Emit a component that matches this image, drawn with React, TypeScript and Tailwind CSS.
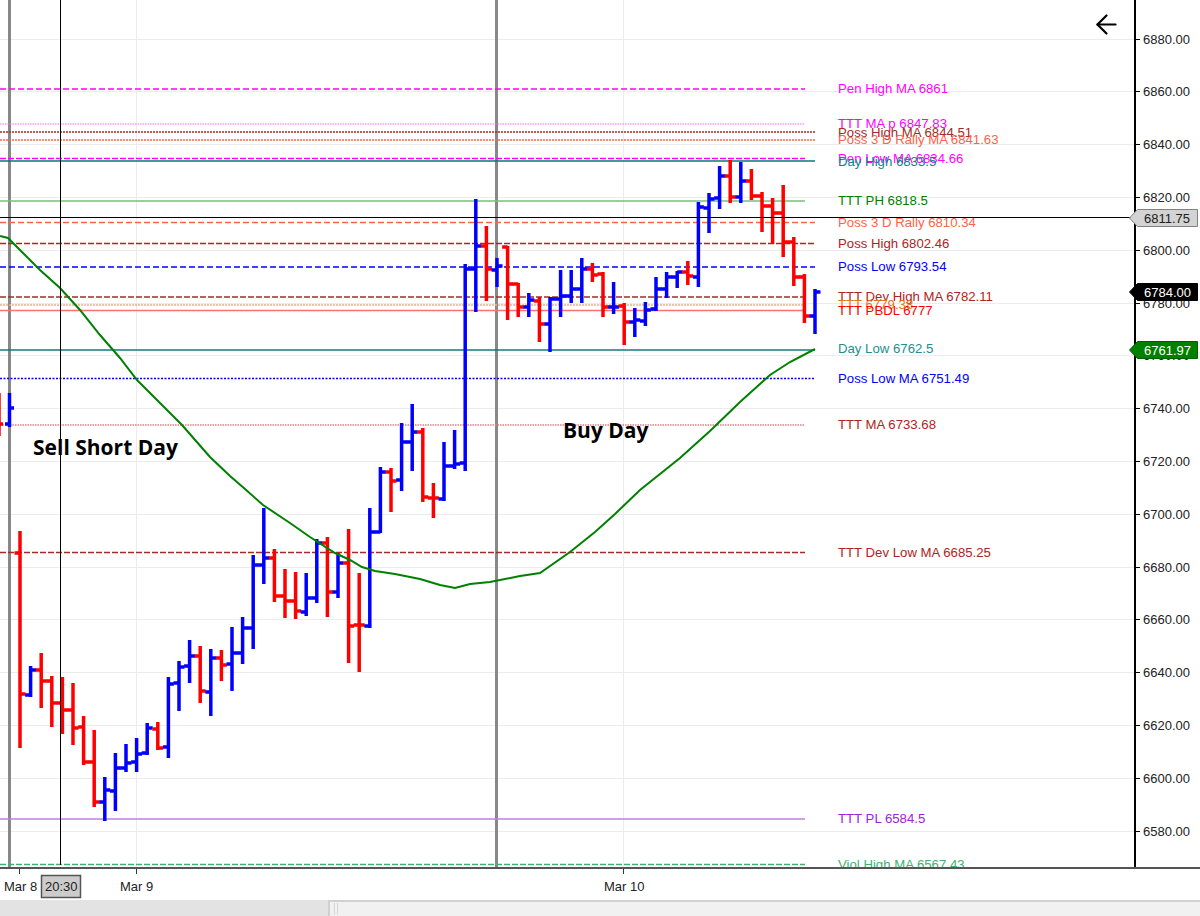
import { ArrowLeft } from "lucide-react";

// [color, high, low, open, close] in chart pixels, one bar every 10.6px
const bars: [string, number, number, number, number][] = [
  ["r", 531, 748, 553, 694], ["b", 666, 697, 695, 670], ["r", 653, 708, 670, 681], ["r", 676, 727, 681, 703],
  ["r", 677, 734, 703, 710], ["r", 683, 745, 710, 728], ["r", 716, 765, 727, 762], ["r", 730, 807, 762, 802],
  ["b", 777, 821, 802, 790], ["b", 753, 811, 791, 768], ["b", 744, 772, 768, 763], ["b", 738, 772, 762, 754],
  ["b", 723, 755, 753, 728], ["r", 722, 750, 729, 748], ["b", 677, 758, 747, 684], ["b", 661, 711, 683, 667],
  ["b", 640, 683, 666, 656], ["r", 646, 703, 656, 691], ["b", 649, 716, 692, 658], ["r", 650, 681, 658, 665],
  ["b", 627, 691, 664, 653], ["b", 617, 664, 653, 628], ["b", 555, 649, 628, 565], ["b", 508, 584, 565, 558],
  ["r", 549, 602, 558, 596], ["r", 569, 618, 596, 601], ["r", 572, 619, 601, 611], ["b", 573, 616, 612, 598],
  ["b", 539, 603, 598, 543], ["r", 537, 617, 543, 592], ["b", 553, 598, 592, 563], ["r", 529, 663, 563, 626],
  ["r", 573, 672, 625, 625], ["b", 508, 628, 626, 532], ["b", 467, 533, 532, 472], ["r", 468, 512, 472, 481],
  ["b", 423, 491, 480, 442], ["b", 404, 471, 442, 432], ["r", 428, 502, 432, 497], ["r", 483, 518, 498, 498],
  ["b", 442, 501, 499, 466], ["b", 430, 469, 466, 464], ["b", 264, 471, 463, 269], ["b", 199, 312, 269, 246],
  ["r", 226, 301, 246, 269], ["b", 258, 287, 270, 266], ["r", 246, 320, 247, 284], ["r", 283, 317, 284, 307],
  ["b", 293, 317, 307, 300], ["r", 297, 342, 301, 324], ["b", 297, 352, 324, 299], ["b", 270, 317, 299, 296],
  ["b", 270, 303, 296, 289], ["b", 258, 303, 289, 269], ["r", 263, 282, 269, 275], ["r", 272, 317, 274, 307],
  ["b", 282, 314, 307, 307], ["r", 303, 345, 306, 322], ["b", 308, 337, 322, 320], ["b", 302, 326, 321, 310],
  ["b", 277, 311, 309, 289], ["b", 272, 298, 289, 277], ["b", 271, 288, 277, 272], ["r", 261, 285, 272, 276],
  ["b", 202, 287, 277, 207], ["b", 193, 233, 208, 199], ["b", 166, 209, 198, 176], ["r", 160, 203, 176, 197],
  ["b", 162, 203, 197, 181], ["r", 169, 200, 181, 196], ["r", 192, 232, 196, 206], ["r", 198, 244, 206, 213],
  ["r", 185, 257, 213, 242], ["r", 237, 286, 242, 277], ["r", 274, 323, 277, 316], ["b", 289, 334, 316, 292],
];

const levels = [
  { y: 89, end: 805, color: "#ff00ff", w: 1.5, dash: "6 3", label: "Pen High MA 6861", text: "#ff00ff", ty: 88 },
  { y: 124, end: 805, color: "#ff66ff", w: 1, dash: "1.5 1", label: "TTT MA p 6847.83", text: "#ff00ff", ty: 123 },
  { y: 132, end: 815, color: "#a52a2a", w: 1.5, dash: "2 1", label: "Poss High MA 6844.51", text: "#a52a2a", ty: 132 },
  { y: 140, end: 815, color: "#ff6347", w: 1.5, dash: "2 1", label: "Poss 3 D Rally MA 6841.63", text: "#ff6347", ty: 139 },
  { y: 158.5, end: 805, color: "#ff00ff", w: 1.5, dash: "6 2", label: "Pen Low MA 6834.66", text: "#ff00ff", ty: 158 },
  { y: 161, end: 815, color: "#007a7a", w: 1.5, dash: "", label: "Day High 6833.5", text: "#008b8b", ty: 161 },
  { y: 201, end: 805, color: "#7dbb7d", w: 1.5, dash: "", label: "TTT PH 6818.5", text: "#008000", ty: 200 },
  { y: 222.5, end: 815, color: "#ff6347", w: 1.5, dash: "6 3", label: "Poss 3 D Rally 6810.34", text: "#ff6347", ty: 222 },
  { y: 243.5, end: 815, color: "#b22222", w: 1.5, dash: "6 2", label: "Poss High 6802.46", text: "#b22222", ty: 243 },
  { y: 267, end: 815, color: "#0000ff", w: 1.5, dash: "6 3", label: "Poss Low 6793.54", text: "#0000ff", ty: 266 },
  { y: 297, end: 805, color: "#a52a2a", w: 1.5, dash: "6 2", label: "TTT Dev High MA 6782.11", text: "#b22222", ty: 296 },
  { y: 305, end: 805, color: "#f0b080", w: 1.5, dash: "2 1", label: "TTT 6779.38", text: "#e07b20", ty: 304 },
  { y: 310.5, end: 805, color: "#ff7070", w: 1.5, dash: "", label: "TTT PBDL 6777", text: "#ff0000", ty: 310 },
  { y: 350, end: 815, color: "#157a7a", w: 1.5, dash: "", label: "Day Low 6762.5", text: "#1e9090", ty: 348 },
  { y: 378.5, end: 815, color: "#0000ff", w: 1.5, dash: "2 1.5", label: "Poss Low MA 6751.49", text: "#0000ff", ty: 378 },
  { y: 425, end: 805, color: "#d98080", w: 1.5, dash: "1.5 1", label: "TTT MA 6733.68", text: "#b22222", ty: 424 },
  { y: 552.5, end: 805, color: "#a52a2a", w: 1.5, dash: "6 2", label: "TTT Dev Low MA 6685.25", text: "#b22222", ty: 552 },
  { y: 819, end: 805, color: "#c17fe0", w: 1.5, dash: "", label: "TTT PL 6584.5", text: "#a020e0", ty: 818 },
  { y: 864.5, end: 805, color: "#3cb371", w: 1.5, dash: "6 2", label: "Viol High MA 6567.43", text: "#3cb371", ty: 864 },
];

const maLine =
  "0,236 8,238 20,250 40,270 60,288 80,310 100,335 120,358 137,380 160,403 182,425 210,457 230,476 245,489 263,505 290,523 310,537 335,553 350,560 362,567 375,571 395,574 420,579 440,585 455,588 470,584 490,582 520,576 540,573 570,552 595,532 615,514 640,490 680,458 710,431 740,402 770,375 790,362 815,349";

const prices = Array.from({ length: 16 }, (_, i) => 6880 - i * 20);
const priceY = (p: number) => 38.5 + (6880 - p) * 2.64;

function PriceTag({ y, fill, stroke, color, value }: { y: number; fill: string; stroke: string; color: string; value: string }) {
  return (
    <g>
      <polygon points={`-6.5,${y + 8.5} 1.5,${y} 61.5,${y} 61.5,${y + 17} 1.5,${y + 17}`} fill={fill} stroke={stroke} />
      <text x={8} y={y + 13} fill={color} className="text-[13px]">
        {value}
      </text>
    </g>
  );
}

export default function App() {
  return (
    <div className="w-[1200px] h-[916px] flex flex-col bg-white overflow-hidden font-['Liberation_Sans',sans-serif]">
      <div className="flex h-[867px] relative">
        <svg width="1134" height="867" className="block shrink-0">
          {prices.map((p) => (
            <line key={p} x1="0" x2="1134" y1={Math.round(priceY(p)) + 0.5} y2={Math.round(priceY(p)) + 0.5} stroke="#ececec" />
          ))}
          <line x1="136.5" x2="136.5" y1="0" y2="867" stroke="#ececec" />
          <line x1="623.5" x2="623.5" y1="0" y2="867" stroke="#ececec" />
          <line x1="9.5" x2="9.5" y1="0" y2="867" stroke="#888888" strokeWidth="3" />
          <line x1="496.5" x2="496.5" y1="0" y2="867" stroke="#888888" strokeWidth="3" />

          {levels.map((l) => (
            <line key={l.label} x1="0" x2={l.end} y1={l.y} y2={l.y} stroke={l.color} strokeWidth={l.w} strokeDasharray={l.dash || undefined} />
          ))}
          {levels.map((l) => (
            <text key={l.label} x="838" y={l.ty + 4.5} fill={l.text} className="text-[13.2px]">
              {l.label}
            </text>
          ))}

          {/* two bars cut off at the left edge */}
          <g stroke="#ff0000" strokeWidth="3.5">
            <line x1="-1" x2="-1" y1="393" y2="436" />
            <line x1="-1" x2="3" y1="424" y2="424" />
          </g>
          <g stroke="#0000ff" strokeWidth="3.5">
            <line x1="9.5" x2="9.5" y1="393" y2="427" />
            <line x1="5" x2="9.5" y1="424" y2="424" />
            <line x1="9.5" x2="14" y1="408" y2="408" />
          </g>

          {bars.map(([c, high, low, open, close], i) => {
            const x = 20 + i * 10.6;
            return (
              <g key={i} stroke={c === "r" ? "#ff0000" : "#0000ff"} strokeWidth="3.5">
                <line x1={x} x2={x} y1={high} y2={low} />
                <line x1={x - 5.5} x2={x} y1={open} y2={open} />
                <line x1={x} x2={x + 5.5} y1={close} y2={close} />
              </g>
            );
          })}

          <polyline points={maLine} fill="none" stroke="#008000" strokeWidth="2" />

          <line x1="60.5" x2="60.5" y1="0" y2="865" stroke="#000000" />
          <line x1="0" x2="1134" y1="217.5" y2="217.5" stroke="#000000" />

          <text x="33" y="455" fill="#000000" className="text-[21px] font-bold font-['Open_Sans',sans-serif]">
            Sell Short Day
          </text>
          <text x="563" y="438" fill="#000000" className="text-[21px] font-bold font-['Open_Sans',sans-serif]">
            Buy Day
          </text>
        </svg>

        <ArrowLeft className="absolute left-[1091px] top-[9px] text-black" size={31} strokeWidth={2.2} absoluteStrokeWidth />

        <div className="flex-1 border-l-2 border-black">
          <svg width="64" height="867" className="block overflow-visible">
            {prices.map((p) => (
              <g key={p}>
                <line x1="0" x2="4" y1={Math.round(priceY(p)) + 0.5} y2={Math.round(priceY(p)) + 0.5} stroke="#000000" />
                <text x="7" y={priceY(p) + 5} fill="#222222" className="text-[13px]">
                  {p}.00
                </text>
              </g>
            ))}
            <PriceTag y={209.5} fill="#d3d3d3" stroke="#808080" color="#202020" value="6811.75" />
            <PriceTag y={283.5} fill="#000000" stroke="#000000" color="#ffffff" value="6784.00" />
            <PriceTag y={341.5} fill="#008000" stroke="#006000" color="#ffffff" value="6761.97" />
          </svg>
        </div>
      </div>

      <div className="h-[33px] border-t-2 border-[#555555]">
        <svg width="1200" height="31" className="block">
          <line x1="19.5" x2="19.5" y1="0" y2="5" stroke="#333333" />
          <line x1="136.5" x2="136.5" y1="0" y2="5" stroke="#333333" />
          <line x1="623.5" x2="623.5" y1="0" y2="5" stroke="#333333" />
          <text x="4" y="22" fill="#222222" className="text-[13px]">Mar 8</text>
          <rect x="41.5" y="6.5" width="39" height="22" fill="#cccccc" stroke="#555555" strokeWidth="1.5" />
          <text x="45" y="22" fill="#222222" className="text-[13px]">20:30</text>
          <text x="120" y="22" fill="#222222" className="text-[13px]">Mar 9</text>
          <text x="604" y="22" fill="#222222" className="text-[13px]">Mar 10</text>
        </svg>
      </div>

      <div className="flex flex-1 bg-[#e3e3e3]">
        <div className="w-[328px]" />
        <div className="flex-1 flex items-center gap-[2px] pl-[4px] bg-[#f1f1f1] border-t-2 border-l-2 border-[#d0d0d0]">
          <div className="w-px h-[12px] bg-[#d5d5d5]" />
          <div className="w-px h-[12px] bg-[#d5d5d5]" />
        </div>
      </div>
    </div>
  );
}
